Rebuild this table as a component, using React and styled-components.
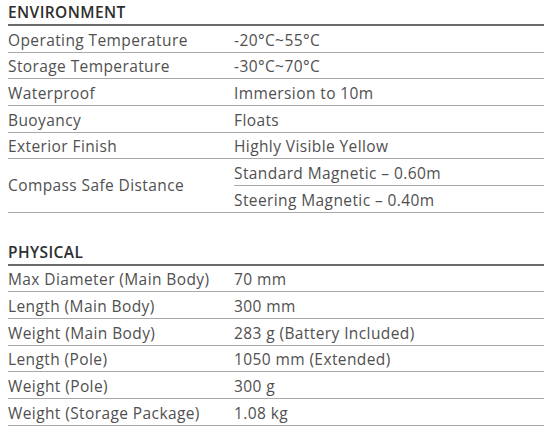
import React from "react";
import styled, { createGlobalStyle } from "styled-components";

const GlobalStyle = createGlobalStyle`
  html, body {
    margin: 0;
    padding: 0;
    background: #fff;
  }
  body {
    font-family: "Open Sans", Lato, "Liberation Sans", sans-serif;
    color: #505050;
  }
`;

const Page = styled.div`
  width: 536px;
  padding: 0 6px 0 8px;
`;

const Section = styled.section`
  margin-bottom: 27px;
`;

const Title = styled.h2`
  margin: -1px 0 0;
  padding-top: 1px;
  height: 24px;
  border-bottom: 2px solid #6a6a6a;
  font-size: 15.5px;
  font-weight: 600;
  letter-spacing: 0.4px;
  line-height: 24px;
  color: #2e2e2e;
  box-sizing: content-box;
`;

const Row = styled.div`
  display: grid;
  grid-template-columns: 226px 1fr;
  border-bottom: 1px solid #a9a9a9;
  height: ${(p) => (p.double ? "53.33px" : "26.67px")};
  box-sizing: border-box;
`;

const Label = styled.div`
  font-size: 15.5px;
  letter-spacing: 0.4px;
  display: flex;
  align-items: ${(p) => (p.center ? "center" : "flex-end")};
  padding-bottom: ${(p) => (p.center ? "0" : "1px")};
`;

const Values = styled.div`
  display: flex;
  flex-direction: column;
`;

const Value = styled.div`
  flex: 1;
  font-size: 15.5px;
  letter-spacing: 0.4px;
  display: flex;
  align-items: flex-end;
  padding-bottom: 1px;
  border-bottom: ${(p) => (p.divided ? "1px solid #a9a9a9" : "none")};
`;

const environment = [
  ["Operating Temperature", "-20°C~55°C"],
  ["Storage Temperature", "-30°C~70°C"],
  ["Waterproof", "Immersion to 10m"],
  ["Buoyancy", "Floats"],
  ["Exterior Finish", "Highly Visible Yellow"],
];

const physical = [
  ["Max Diameter (Main Body)", "70 mm"],
  ["Length (Main Body)", "300 mm"],
  ["Weight (Main Body)", "283 g (Battery Included)"],
  ["Length (Pole)", "1050 mm (Extended)"],
  ["Weight (Pole)", "300 g"],
  ["Weight (Storage Package)", "1.08 kg"],
];

const SpecRows = ({ rows }) =>
  rows.map(([label, value]) => (
    <Row key={label}>
      <Label>{label}</Label>
      <Value>{value}</Value>
    </Row>
  ));

export default function App() {
  return (
    <Page>
      <GlobalStyle />
      <Section>
        <Title>ENVIRONMENT</Title>
        <SpecRows rows={environment} />
        <Row double>
          <Label center>Compass Safe Distance</Label>
          <Values>
            <Value divided>Standard Magnetic – 0.60m</Value>
            <Value>Steering Magnetic – 0.40m</Value>
          </Values>
        </Row>
      </Section>
      <Section>
        <Title>PHYSICAL</Title>
        <SpecRows rows={physical} />
      </Section>
    </Page>
  );
}
